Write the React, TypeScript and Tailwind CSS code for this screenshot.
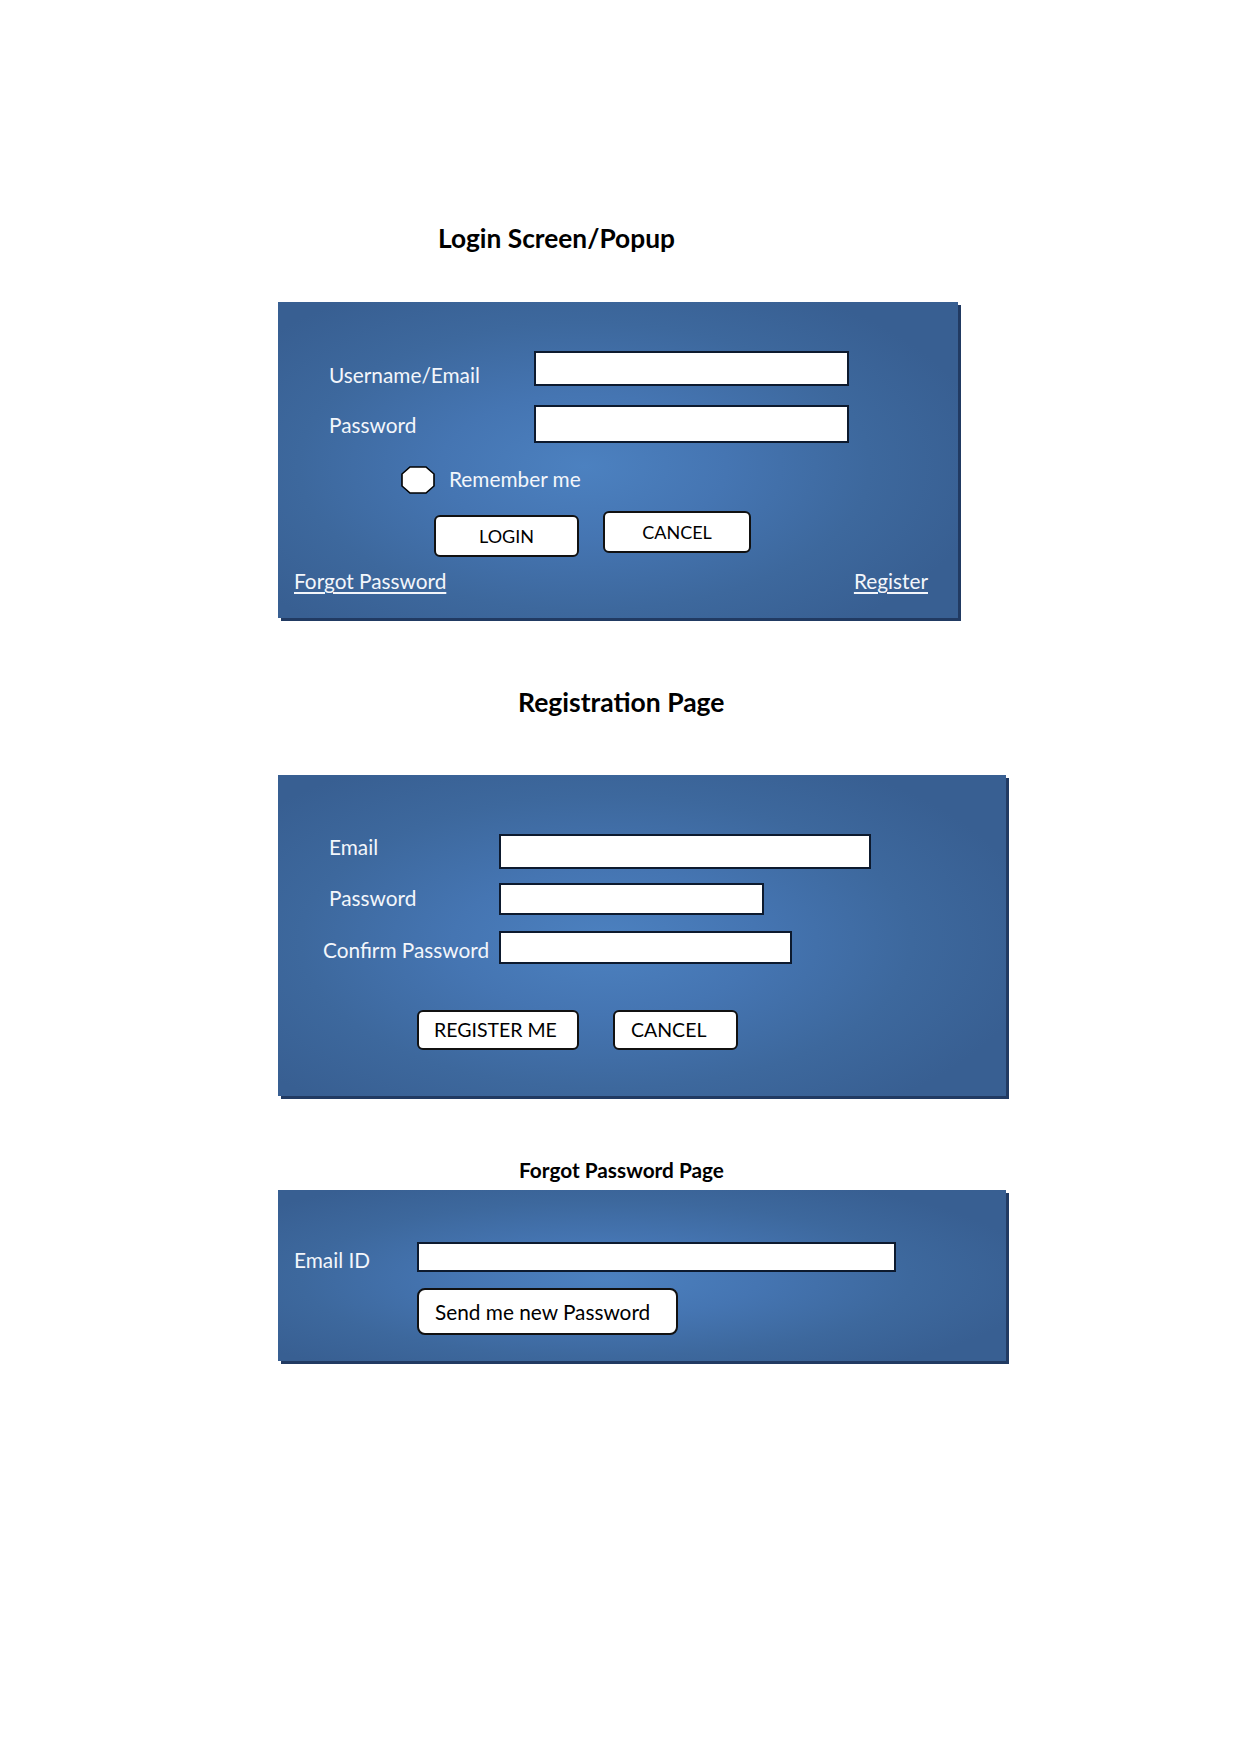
import React from 'react';

const panelBg =
  'bg-[radial-gradient(ellipse_60%_65%_at_45%_52%,#4c81c0_0%,#4575b2_35%,#3d689d_70%,#385f92_100%)]';
const panelShadow = 'shadow-[3px_3px_0_#213a62]';

function TextBox({ className }: { className: string }) {
  return <div className={`bg-white border-2 border-[#0d1a2e] ${className}`} />;
}

function Btn({ children, className }: { children: React.ReactNode; className: string }) {
  return (
    <div
      className={`bg-white border-2 border-[#111] rounded-[6px] flex items-center text-black ${className}`}
    >
      {children}
    </div>
  );
}

function Octagon() {
  return (
    <svg width="34" height="28" viewBox="0 0 34 28">
      <polygon
        points="9,1 25,1 33,8 33,20 25,27 9,27 1,20 1,8"
        fill="#fff"
        stroke="#000"
        strokeWidth="1.6"
      />
    </svg>
  );
}

export default function App() {
  return (
    <div
      className="w-[1240px] min-h-[1754px] bg-white text-black flex flex-col pl-[278px]"
      style={{ fontFamily: 'Lato, "Open Sans", sans-serif' }}
    >
      {/* Login */}
      <h1 className="mt-[222px] ml-[160px] text-[26.3px] font-bold leading-[32px]">Login Screen/Popup</h1>

      <div className={`mt-[48px] w-[680px] h-[316px] ${panelBg} ${panelShadow} text-[#f3f6fb] text-[20.8px] leading-[24px] flex flex-col`}>
        <div className="mt-[49px] flex items-center h-[35px]">
          <span className="ml-[51px] w-[205px] pt-[12px] leading-[20px]">Username/Email</span>
          <TextBox className="w-[315px] h-[35px]" />
        </div>
        <div className="mt-[19px] flex items-center h-[38px]">
          <span className="ml-[51px] w-[205px] pt-[2px]">Password</span>
          <TextBox className="w-[315px] h-[38px]" />
        </div>
        <div className="mt-[23px] flex items-center h-[28px] ml-[123px] gap-[14px]">
          <Octagon />
          <span className="pb-[2px]">Remember me</span>
        </div>
        <div className="mt-[17px] flex items-start ml-[156px] text-[18px]">
          <Btn className="mt-[4px] w-[145px] h-[42px] justify-center">LOGIN</Btn>
          <Btn className="ml-[24px] w-[148px] h-[42px] justify-center">CANCEL</Btn>
        </div>
        <div className="mt-[12px] flex justify-between pl-[16px] pr-[30px]">
          <span className="underline underline-offset-[3px]">Forgot Password</span>
          <span className="underline underline-offset-[3px]">Register</span>
        </div>
      </div>

      {/* Registration */}
      <h2 className="mt-[68px] ml-[240px] text-[26.5px] font-bold leading-[32px]">Registration Page</h2>

      <div className={`mt-[57px] w-[728px] h-[321px] ${panelBg} ${panelShadow} text-[#f3f6fb] text-[20.8px] leading-[24px] flex flex-col`}>
        <div className="mt-[59px] flex items-center h-[35px]">
          <span className="ml-[51px] w-[170px] pb-[10px] leading-[20px]">Email</span>
          <TextBox className="w-[372px] h-[35px]" />
        </div>
        <div className="mt-[14px] flex items-center h-[32px]">
          <span className="ml-[51px] w-[170px] pb-[3px]">Password</span>
          <TextBox className="w-[265px] h-[32px]" />
        </div>
        <div className="mt-[16px] flex items-center h-[33px]">
          <span className="ml-[45px] w-[176px] pt-[5px] leading-[20px]">Confirm Password</span>
          <TextBox className="w-[293px] h-[33px]" />
        </div>
        <div className="mt-[46px] flex ml-[139px] gap-[34px] text-[19.5px]">
          <Btn className="w-[162px] h-[40px] pl-[15px]">REGISTER ME</Btn>
          <Btn className="w-[125px] h-[40px] pl-[16px]">CANCEL</Btn>
        </div>
      </div>

      {/* Forgot password */}
      <h3 className="mt-[61px] ml-[241px] text-[20.8px] font-bold leading-[26px]">Forgot Password Page</h3>

      <div className={`mt-[7px] w-[728px] h-[171px] ${panelBg} ${panelShadow} text-[#f3f6fb] text-[20.8px] leading-[24px] flex flex-col`}>
        <div className="mt-[52px] flex items-center h-[30px]">
          <span className="ml-[16px] w-[123px] pt-[6px]">Email ID</span>
          <TextBox className="w-[479px] h-[30px]" />
        </div>
        <Btn className="mt-[16px] ml-[139px] w-[261px] h-[47px] pl-[16px] rounded-[8px] text-[20.8px]">
          Send me new Password
        </Btn>
      </div>
    </div>
  );
}
